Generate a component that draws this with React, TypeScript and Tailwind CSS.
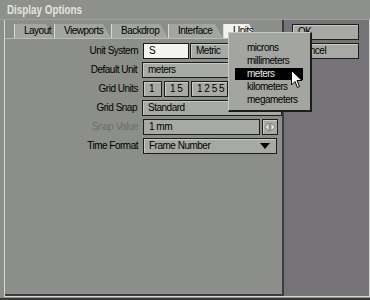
import React from "react";

const field =
  "h-[16px] bg-[#a7a9a5] border border-[#1c1c1c] shadow-[inset_1px_1px_0_#c9cbc7] flex items-center px-[5px] text-black whitespace-nowrap overflow-hidden";

function Tab({ label, active, w }: { label: string; active?: boolean; w: string }) {
  return (
    <div className={`relative h-[14px] ${w} flex items-center pl-[10px]`}>
      <div
        className={`absolute inset-0 ${active ? "bg-[#f2f2ee]" : "bg-[#a3a5a1]"}`}
        style={{ clipPath: "polygon(0 0, calc(100% - 8px) 0, 100% 100%, 0 100%)" }}
      />
      <div className="absolute left-0 top-0 h-full w-[1px] bg-[#d8dad6]" />
      <span className="relative whitespace-nowrap">{label}</span>
    </div>
  );
}

function Row({ label, disabled, children }: { label: string; disabled?: boolean; children: React.ReactNode }) {
  return (
    <div className="flex items-center h-[16px]">
      <div className={`w-[138px] text-right pr-[5px] whitespace-nowrap ${disabled ? "text-[#6d6f6b]" : "text-black"}`}>{label}</div>
      <div className="flex items-center">{children}</div>
    </div>
  );
}

export default function App() {
  return (
    <div
      className="relative w-[370px] h-[300px] bg-[#8c8e8a] overflow-hidden text-[10px] tracking-[-0.5px] leading-none"
      style={{ fontFamily: '"Liberation Sans", Arial, sans-serif' }}
    >
      {/* title bar */}
      <div className="h-[20px] flex items-center pl-[7px] bg-[#8e908c] border-b border-[#9c9e9a]">
        <span className="inline-block origin-left scale-x-[0.82] text-[#e4e4dc] font-bold text-[12px] tracking-[0px]">
          Display Options
        </span>
      </div>
      {/* body */}
      <div className="flex h-[280px] border-l-[4px] border-[#8c8e8a]">
        <div className="flex h-[277px] w-[366px] border-l border-b border-[#d6d8d4]">
          {/* left content */}
          <div className="w-[279px] h-[276px] bg-[#8c8e8a] border-r-2 border-b-2 border-[#3d3b40] flex flex-col">
            <div className="flex items-end h-[19px] pl-[9px] border-b border-[#b8bab6]">
              <Tab label="Layout" w="w-[40px]" />
              <Tab label="Viewports" w="w-[57px]" />
              <Tab label="Backdrop" w="w-[57px]" />
              <Tab label="Interface" w="w-[55px]" />
              <Tab label="Units" w="w-[34px]" active />
            </div>
            <div className="flex flex-col gap-[3px] pt-[4px]">
              <Row label="Unit System">
                <div className={`${field} w-[46px] bg-[#f4f4f0] shadow-none`}>S</div>
                <div className={`${field} w-[42px] ml-[1px]`}>Metric</div>
              </Row>
              <Row label="Default Unit">
                <div className={`${field} w-[140px]`}>meters</div>
              </Row>
              <Row label="Grid Units">
                <div className={`${field} w-[19px]`}>1</div>
                <div className={`${field} w-[25px] ml-[2px]`}>1 5</div>
                <div className={`${field} w-[37px] ml-[2px]`}>1 2 5 5</div>
                <div className={`${field} w-[20px] ml-[1px] bg-[#f4f4f0]`} />
              </Row>
              <Row label="Grid Snap">
                <div className={`${field} w-[140px]`}>Standard</div>
              </Row>
              <Row label="Snap Value" disabled>
                <div className={`${field} w-[117px] bg-[#4a4a4a] shadow-none text-[#8e8e8c]`}>1 mm</div>
                <div className={`${field} w-[16px] ml-[2px] justify-center px-0`}>
                  <svg width="10" height="8" viewBox="0 0 10 8" className="shrink-0 block">
                    <path d="M4 0 L0 4 L4 8 Z" fill="#e4e4e0" stroke="#5a5a58" strokeWidth="0.6" />
                    <path d="M6 0 L10 4 L6 8 Z" fill="#e4e4e0" stroke="#5a5a58" strokeWidth="0.6" />
                  </svg>
                </div>
              </Row>
              <Row label="Time Format">
                <div className={`${field} w-[134px] justify-between`}>
                  <span>Frame Number</span>
                  <svg width="10" height="6" viewBox="0 0 10 6" className="mr-[1px] shrink-0">
                    <path d="M0 0 H10 L5 6 Z" fill="#000" />
                  </svg>
                </div>
              </Row>
            </div>
          </div>
          {/* right panel */}
          <div className="flex-1 h-[276px] bg-[#757278] border-r border-[#d6d8d4] flex flex-col gap-[3px] pt-[4px] pl-[8px]">
            <div className={`${field} w-[67px] h-[15px] px-[4px]`}>OK</div>
            <div className={`${field} w-[67px] px-[4px]`}>Cancel</div>
          </div>
        </div>
      </div>
      <div className="absolute left-0 right-0 bottom-0 h-[2px] bg-[#3a3a3a]" />

      {/* dropdown menu */}
      <div className="absolute left-[228px] top-[32px] w-[84px] h-[80px] bg-[#a3a5a1] border-t border-l border-[#c6c8c4] border-r-2 border-b-2 border-r-[#1c1c1c] border-b-[#1c1c1c] flex flex-col pt-[9px] text-black">
        <div className="h-[12px] flex items-center pl-[18px]">microns</div>
        <div className="h-[12px] flex items-center pl-[18px] mt-[1px]">millimeters</div>
        <div className="h-[12px] flex items-center pl-[12px] ml-[6px] mr-[7px] bg-black text-[#e8e8e8] mt-[1px]">
          meters
        </div>
        <div className="h-[12px] flex items-center pl-[18px] mt-[1px]">kilometers</div>
        <div className="h-[12px] flex items-center pl-[18px] mt-[1px]">megameters</div>
      </div>

      {/* cursor */}
      <svg className="absolute left-[291px] top-[70px]" width="12" height="19" viewBox="0 0 12 19">
        <path d="M0.5 0.5 L0.5 15 L4 11.5 L6.5 17.5 L8.5 16.5 L6 10.5 L11 10.5 Z" fill="#fff" stroke="#000" strokeWidth="1" />
      </svg>
    </div>
  );
}
